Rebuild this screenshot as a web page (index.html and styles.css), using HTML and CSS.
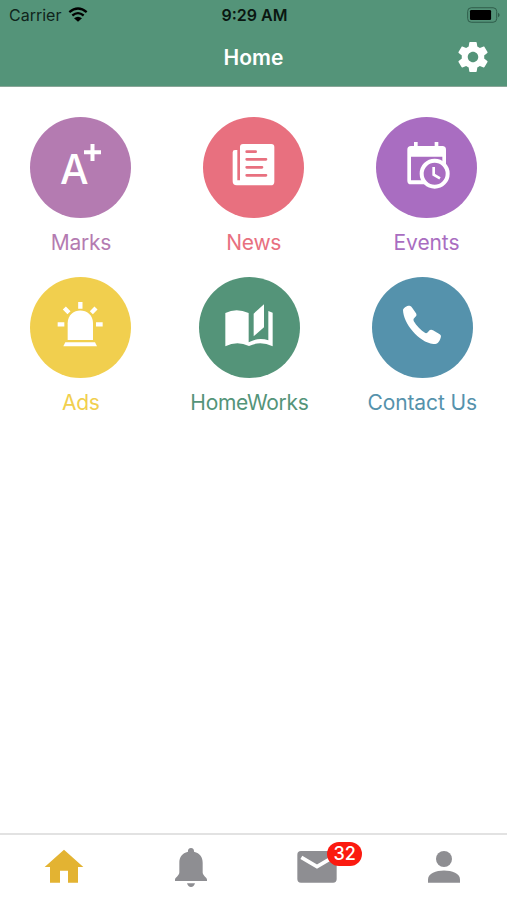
FILE: index.html
```html
<!DOCTYPE html>
<html lang="en">
<head>
  <meta charset="UTF-8">
  <meta name="viewport" content="width=device-width, initial-scale=1.0">
  <title>Home</title>
  <link rel="stylesheet" href="styles.css">
</head>
<body>
  <header>
    <div class="status-bar">
      <div class="carrier">
        <span>Carrier</span>
        <svg class="wifi" viewBox="0 0 60 44">
          <path d="M4 15Q30 -7 56 15M13 25Q30 11 47 25" fill="none" stroke="currentColor" stroke-width="7"/>
          <path d="M18 33Q30 24 42 33L30 44Z" fill="currentColor"/>
        </svg>
      </div>
      <span class="time">9:29 AM</span>
      <svg class="battery" viewBox="0 0 100 48">
        <rect x="2" y="2" width="88" height="44" rx="11" fill="none" stroke="#2f5c4a" stroke-width="3"/>
        <rect x="9" y="9" width="64" height="30" rx="4" fill="#000"/>
        <path d="M94 17Q99 20 99 24T94 31Z" fill="#2f5c4a"/>
      </svg>
    </div>
    <div class="nav-bar">
      <h1>Home</h1>
      <svg class="settings" viewBox="0 0 24 24">
        <path fill="#fff" d="M19.43 12.98c.04-.32.07-.64.07-.98s-.03-.66-.07-.98l2.11-1.65c.19-.15.24-.42.12-.64l-2-3.46c-.12-.22-.39-.3-.61-.22l-2.49 1c-.52-.4-1.08-.73-1.69-.98l-.38-2.65C14.46 2.18 14.25 2 14 2h-4c-.25 0-.46.18-.49.42l-.38 2.65c-.61.25-1.17.59-1.69.98l-2.49-1c-.23-.09-.49 0-.61.22l-2 3.46c-.13.22-.07.49.12.64l2.11 1.65c-.04.32-.07.65-.07.98s.03.66.07.98l-2.11 1.65c-.19.15-.24.42-.12.64l2 3.46c.12.22.39.3.61.22l2.49-1c.52.4 1.08.73 1.69.98l.38 2.65c.03.24.24.42.49.42h4c.25 0 .46-.18.49-.42l.38-2.65c.61-.25 1.17-.59 1.69-.98l2.49 1c.23.09.49 0 .61-.22l2-3.46c.12-.22.07-.49-.12-.64l-2.11-1.65zM12 15.5c-1.93 0-3.5-1.57-3.5-3.5s1.57-3.5 3.5-3.5 3.5 1.57 3.5 3.5-1.57 3.5-3.5 3.5z"/>
      </svg>
    </div>
  </header>

  <main>
    <div class="row">
      <div class="item marks">
        <div class="circle">
          <svg viewBox="0 0 303 303">
            <text class="grade" x="133" y="202" text-anchor="middle">A</text>
            <path d="M162 106H213M187.500 81V132" stroke="#fff" stroke-width="12"/>
          </svg>
        </div>
        <span class="label">Marks</span>
      </div>
      <div class="item news">
        <div class="circle">
          <svg viewBox="0 0 303 303" fill="#fff">
            <path d="M120 81H205Q214 81 214 90V194Q214 205 203 205H101Q89 205 89 193V106Q89 99 96 99H103V190H111V90Q111 81 120 81Z"/>
            <path d="M131 104H158M131 127H189M131 151H177M131 175H189" stroke="#e8707f" stroke-width="8" stroke-linecap="round"/>
          </svg>
        </div>
        <span class="label">News</span>
      </div>
      <div class="item events">
        <div class="circle">
          <svg viewBox="0 0 303 303" fill="#fff">
            <path d="M114 75H125V87H176V75H187V87H199Q210 87 210 98V145H199V119H105V190H160V202H105Q94 202 94 191V98Q94 87 105 87H114Z"/>
            <circle cx="176" cy="170" r="39" fill="#a96dc1" stroke="#fff" stroke-width="12"/>
            <path d="M173 150V173L192 184" fill="none" stroke="#fff" stroke-width="8"/>
          </svg>
        </div>
        <span class="label">Events</span>
      </div>
    </div>
    <div class="row">
      <div class="item ads">
        <div class="circle">
          <svg viewBox="0 0 303 303" fill="#fff">
            <path d="M113 189V139C113 88 189 88 189 139V189Z"/>
            <path d="M106 196H195L201 208H100Z"/>
            <path d="M151 75V95M83 142H103M198 142H218M103 93L117 107M198 93L184 107" stroke="#fff" stroke-width="13"/>
          </svg>
        </div>
        <span class="label">Ads</span>
      </div>
      <div class="item homeworks">
        <div class="circle">
          <svg viewBox="0 0 303 303" fill="#fff">
            <path d="M79 108Q112 92 149 108V196Q180 179 208 190V102L221 107V208Q184 190 150 207Q114 190 79 208Z"/>
            <path d="M164 110L195 82V151L164 178Z"/>
          </svg>
        </div>
        <span class="label">HomeWorks</span>
      </div>
      <div class="item contact">
        <div class="circle">
          <svg viewBox="0 0 303 303" fill="#fff">
            <path d="M93 99C94 91 107 85 113 86Q118 87 121 93L132 109Q136 116 129 121Q122 126 125 132C133 147 147 160 160 168Q166 170 170 163Q175 156 183 160L202 171Q209 175 206 182C202 195 196 202 184 201C140 196 94 139 93 99Z"/>
          </svg>
        </div>
        <span class="label">Contact Us</span>
      </div>
    </div>
  </main>

  <nav class="tabs">
    <div class="tab active">
      <svg viewBox="0 0 120 120"><path d="M60 8L118 60H102V107H72V71H48V107H18V60H2Z"/></svg>
    </div>
    <div class="tab">
      <svg viewBox="0 0 120 120">
        <path d="M60 3C66 3 70 8 69 14C87 18 95 31 95 47V76C95 87 108 91 108 98V102H12V98C12 91 25 87 25 76V47C25 31 33 18 51 14C50 8 54 3 60 3Z"/>
        <path d="M48 109H72Q69 120 60 120T48 109Z"/>
      </svg>
    </div>
    <div class="tab">
      <div class="mail">
        <svg viewBox="0 0 120 120">
          <rect x="1" y="12" width="118" height="95" rx="11"/>
          <path d="M13 31L60 59L107 31" fill="none" stroke="#fff" stroke-width="11"/>
        </svg>
        <span class="badge">32</span>
      </div>
    </div>
    <div class="tab">
      <svg viewBox="0 0 120 120">
        <circle cx="60" cy="36" r="24"/>
        <path d="M12 107V97C12 62 108 62 108 97V107Z"/>
      </svg>
    </div>
  </nav>
</body>
</html>
```
FILE: styles.css
```css
* {
  box-sizing: border-box;
}

body {
  margin: 0;
  height: 100vh;
  display: flex;
  flex-direction: column;
  font-family: Inter, sans-serif;
  background-color: #fff;
}

svg {
  display: block;
}

/* Header */
header {
  height: 87px;
  background-color: #549479;
  border-bottom: 1px solid #8aa698;
}

.status-bar {
  display: grid;
  grid-template-columns: 1fr auto 1fr;
  align-items: center;
  height: 28px;
  padding: 1px 7px 0 9px;
  font-size: 16px;
  color: #10251c;
}

.carrier {
  display: flex;
  align-items: center;
  gap: 7px;
}

.wifi {
  width: 20px;
  height: 15px;
  color: #000;
}

.time {
  font-weight: 600;
  color: #0a1711;
}

.battery {
  width: 33px;
  height: 16px;
  justify-self: end;
}

.nav-bar {
  display: grid;
  grid-template-columns: 1fr auto 1fr;
  align-items: center;
  height: 58px;
  padding: 0 16px;
}

h1 {
  grid-column: 2;
  margin: 0;
  font-size: 21px;
  font-weight: 600;
  color: #fff;
}

.settings {
  width: 36px;
  height: 36px;
  justify-self: end;
}

/* Menu */
main {
  flex: 1;
  padding: 30px 30px 0 30.4px;
}

.row {
  display: flex;
  justify-content: space-between;
  height: 159.5px;
}

.item {
  display: flex;
  flex-direction: column;
  align-items: center;
}

.circle {
  width: 101px;
  height: 101px;
  border-radius: 50%;
}

.label {
  margin-top: 10px;
  font-size: 21px;
  letter-spacing: -0.3px;
  line-height: 30px;
  white-space: nowrap;
}

.grade {
  font-size: 121px;
  font-weight: 500;
}

.marks { color: #b47bb1; }
.marks .circle { background-color: #b47bb1; }
.news { color: #e8707f; }
.news .circle { background-color: #e8707f; }
.events { color: #a96dc1; }
.events .circle { background-color: #a96dc1; }
.ads { color: #f1cf4e; }
.ads .circle { background-color: #f1cf4e; }
.homeworks { color: #549479; }
.homeworks .circle { background-color: #549479; }
.contact { color: #5592ac; }
.contact .circle { background-color: #5592ac; }

.events .label,
.contact .label {
  letter-spacing: -0.1px;
}

.marks svg {
  fill: #fff;
}

/* Bottom tabs */
.tabs {
  display: flex;
  height: 67px;
  padding-left: 1px;
  border-top: 2px solid #e2e2e2;
}

.tab {
  flex: 1;
  display: flex;
  justify-content: center;
  padding-top: 12px;
  fill: #8e8e92;
}

.tab svg {
  width: 40px;
  height: 40px;
}

.tab.active {
  fill: #e3b332;
}

.mail {
  position: relative;
  height: 40px;
}

.badge {
  position: absolute;
  top: -5px;
  left: 30px;
  width: 35px;
  height: 24px;
  border-radius: 12px;
  background-color: #fb1a10;
  color: #fff;
  font-size: 18px;
  font-weight: 500;
  line-height: 24px;
  text-align: center;
}
```
